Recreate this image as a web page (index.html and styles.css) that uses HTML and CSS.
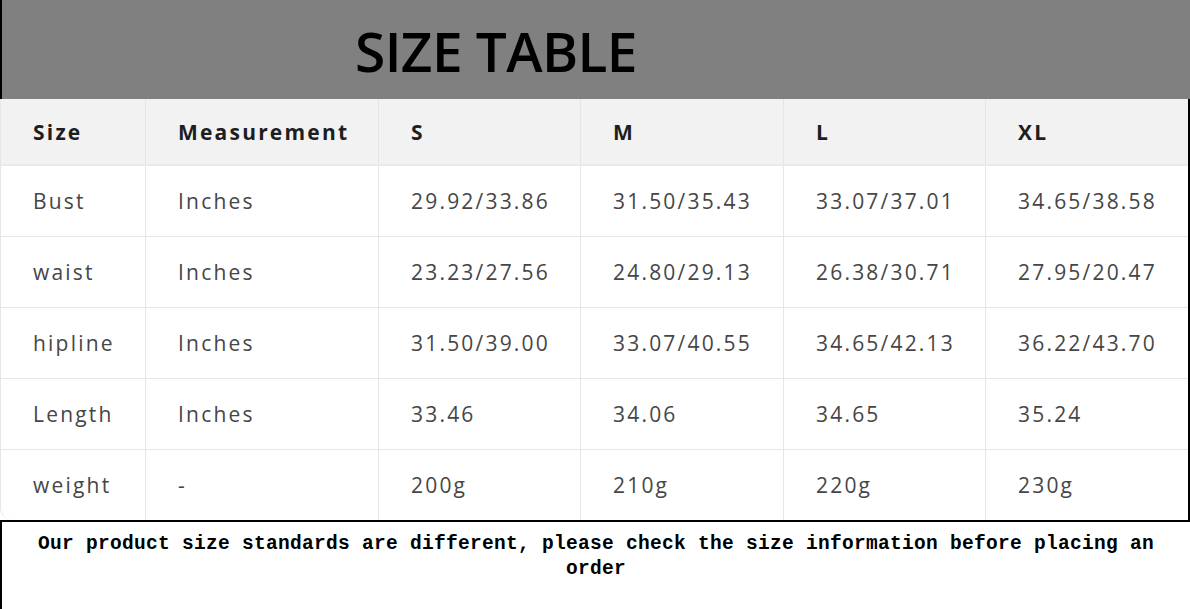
FILE: index.html
```html
<!DOCTYPE html>
<html lang="en">
<head>
<meta charset="utf-8">
<title>Size Table</title>
<link rel="stylesheet" href="styles.css">
</head>
<body>
<div class="page">
  <header class="banner">
    <h1 class="title">SIZE TABLE</h1>
  </header>
  <div class="table-area">
    <table class="sizes">
      <colgroup>
        <col class="c1"><col class="c2"><col class="c3"><col class="c4"><col class="c5"><col class="c6">
      </colgroup>
      <thead>
        <tr><th>Size</th><th>Measurement</th><th>S</th><th>M</th><th>L</th><th>XL</th></tr>
      </thead>
      <tbody>
        <tr><td>Bust</td><td>Inches</td><td>29.92/33.86</td><td>31.50/35.43</td><td>33.07/37.01</td><td>34.65/38.58</td></tr>
        <tr><td>waist</td><td>Inches</td><td>23.23/27.56</td><td>24.80/29.13</td><td>26.38/30.71</td><td>27.95/20.47</td></tr>
        <tr><td>hipline</td><td>Inches</td><td>31.50/39.00</td><td>33.07/40.55</td><td>34.65/42.13</td><td>36.22/43.70</td></tr>
        <tr><td>Length</td><td>Inches</td><td>33.46</td><td>34.06</td><td>34.65</td><td>35.24</td></tr>
        <tr><td>weight</td><td>-</td><td>200g</td><td>210g</td><td>220g</td><td>230g</td></tr>
      </tbody>
    </table>
  </div>
  <footer class="note">
    <p>Our product size standards are different, please check the size information before placing an order</p>
  </footer>
</div>
</body>
</html>
```

FILE: styles.css
```css
html, body {
  margin: 0;
  padding: 0;
  background: #ffffff;
}

.page {
  width: 1190px;
  height: 609px;
  overflow: hidden;
  display: flex;
  flex-direction: column;
}

.banner {
  height: 99px;
  box-sizing: border-box;
  background: #808080;
  border-left: 2px solid #000;
  padding: 23px 0 0 353px;
}

.title {
  margin: 0;
  font-family: "Open Sans", "Noto Sans", sans-serif;
  font-weight: 600;
  font-size: 55px;
  letter-spacing: -0.6px;
  line-height: 56px;
  color: #000;
}

.table-area {
  border-right: 2px solid #000;
  background: #fff;
  height: 421px;
  box-sizing: border-box;
}

.sizes {
  width: 1188px;
  border-collapse: separate;
  border-spacing: 0;
  table-layout: fixed;
  border-left: 1px solid #e6e6e6;
  border-radius: 0 0 0 12px;
  font-family: "Open Sans", "Noto Sans", sans-serif;
  font-size: 21px;
  letter-spacing: 2.2px;
}

.c1 { width: 145px; }
.c2 { width: 233px; }
.c3 { width: 202px; }
.c4 { width: 203px; }
.c5 { width: 202px; }
.c6 { width: 202px; }

.sizes th,
.sizes td {
  text-align: left;
  padding: 0 0 0 32px;
  border-right: 1px solid #e6e6e6;
  border-bottom: 1px solid #e6e6e6;
  white-space: nowrap;
}

.sizes th:last-child,
.sizes td:last-child {
  border-right: none;
}

.sizes th {
  height: 65px;
  background: #f2f2f2;
  color: #1e1e1e;
  font-weight: 700;
  font-size: 21px;
  letter-spacing: 2.2px;
  border-bottom: 2px solid #e9e9e9;
}

.sizes td {
  height: 70px;
  color: #464646;
}

.sizes tbody tr:last-child td {
  border-bottom: none;
}

.note {
  flex: 1;
  border-top: 2px solid #000;
  border-left: 2px solid #000;
  padding: 10px 16px 0;
}

.note p {
  margin: 0;
  text-align: center;
  font-family: "Liberation Mono", "DejaVu Sans Mono", monospace;
  font-weight: 700;
  font-size: 19.5px;
  letter-spacing: 0.3px;
  line-height: 25px;
  color: #000;
}
```
